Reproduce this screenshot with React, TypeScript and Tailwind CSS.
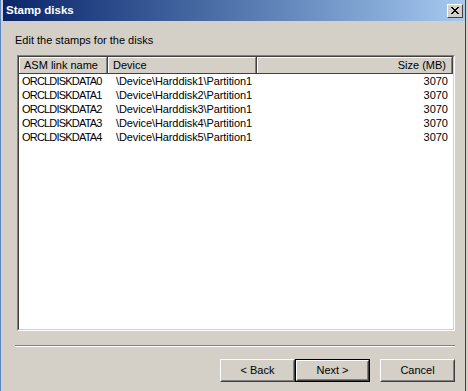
import React from 'react';

const rows = [
  { name: 'ORCLDISKDATA0', device: '\\Device\\Harddisk1\\Partition1', size: '3070' },
  { name: 'ORCLDISKDATA1', device: '\\Device\\Harddisk2\\Partition1', size: '3070' },
  { name: 'ORCLDISKDATA2', device: '\\Device\\Harddisk3\\Partition1', size: '3070' },
  { name: 'ORCLDISKDATA3', device: '\\Device\\Harddisk4\\Partition1', size: '3070' },
  { name: 'ORCLDISKDATA4', device: '\\Device\\Harddisk5\\Partition1', size: '3070' },
];

function Button({ label, isDefault }: { label: string; isDefault?: boolean }) {
  return (
    <div className={`w-[75px] h-[23px] ${isDefault ? 'border border-black' : ''}`}>
      <div className="w-full h-full border border-t-white border-l-white border-b-[#404040] border-r-[#404040]">
        <div className="w-full h-full border border-t-[#d4d0c8] border-l-[#d4d0c8] border-b-[#808080] border-r-[#808080] flex items-center justify-center text-black">
          {label}
        </div>
      </div>
    </div>
  );
}

function HeaderCell({ label, className }: { label: string; className: string }) {
  return (
    <div className={`h-full border-r border-r-[#404040] ${className}`}>
      <div className="h-full border border-t-white border-l-white border-b-[#808080] border-r-[#808080] border-b-0 flex items-center px-[4px]">
        {label}
      </div>
    </div>
  );
}

export default function App() {
  return (
    <div className="w-[468px] h-[391px] bg-[#d4d0c8] flex overflow-hidden font-['Liberation_Sans',Arial,sans-serif] text-[11px] leading-[13px] text-black">
      {/* window edge */}
      <div className="w-px bg-[#5b84c4]" />
      <div className="w-[2px]" />

      <div className="w-[462px] flex flex-col">
        {/* Title bar */}
        <div className="h-[21px] bg-linear-to-r from-[#0a246a] to-[#a6caf0] flex items-center justify-between pl-[3px] pr-[2px]">
          <span className="text-white font-bold text-[11.5px]">Stamp disks</span>
          <div className="w-[16px] h-[14px] bg-[#d4d0c8] border border-t-white border-l-white border-b-[#404040] border-r-[#404040] flex items-center justify-center">
            <svg width="8" height="7" viewBox="0 0 8 7" shapeRendering="crispEdges">
              <path d="M0 0h2v1h-2zM6 0h2v1h-2zM1 1h2v1h-2zM5 1h2v1h-2zM2 2h4v1h-4zM3 3h2v1h-2zM2 4h4v1h-4zM1 5h2v1h-2zM5 5h2v1h-2zM0 6h2v1h-2zM6 6h2v1h-2z" fill="#000" />
            </svg>
          </div>
        </div>

        <p className="mt-[13px] ml-[12px]">Edit the stamps for the disks</p>

        {/* List view */}
        <div className="mt-[8px] ml-[14px] w-[438px] h-[276px] border border-t-[#808080] border-l-[#808080] border-b-white border-r-white">
          <div className="w-full h-full border border-t-[#404040] border-l-[#404040] border-b-[#d4d0c8] border-r-[#d4d0c8] bg-white flex flex-col">
            <div className="h-[17px] flex bg-[#d4d0c8] border-b border-b-[#404040]">
              <HeaderCell label="ASM link name" className="w-[89px]" />
              <HeaderCell label="Device" className="w-[149px]" />
              <div className="h-full flex-1 border-r border-r-[#404040]">
                <div className="h-full border border-t-white border-l-white border-r-[#808080] border-b-0 flex items-center justify-end pr-[5px]">
                  Size (MB)
                </div>
              </div>
            </div>
            {rows.map((r) => (
              <div key={r.name} className="h-[14px] flex items-center leading-[14px]">
                <span className="w-[89px] pl-[3px] tracking-[-0.8px]">{r.name}</span>
                <span className="w-[149px] pl-[8px] tracking-[-0.1px]">{r.device}</span>
                <span className="flex-1 text-right pr-[5px]">{r.size}</span>
              </div>
            ))}
          </div>
        </div>

        {/* Separator */}
        <div className="mt-[14px] ml-[12px] w-[440px] h-[2px] border-t border-t-[#808080] border-b border-b-white" />

        {/* Buttons */}
        <div className="mt-[12px] flex justify-end pr-[10px]">
          <Button label="< Back" />
          <Button label="Next >" isDefault />
          <div className="w-[10px]" />
          <Button label="Cancel" />
        </div>
      </div>

      <div className="w-px bg-[#404040]" />
    </div>
  );
}
